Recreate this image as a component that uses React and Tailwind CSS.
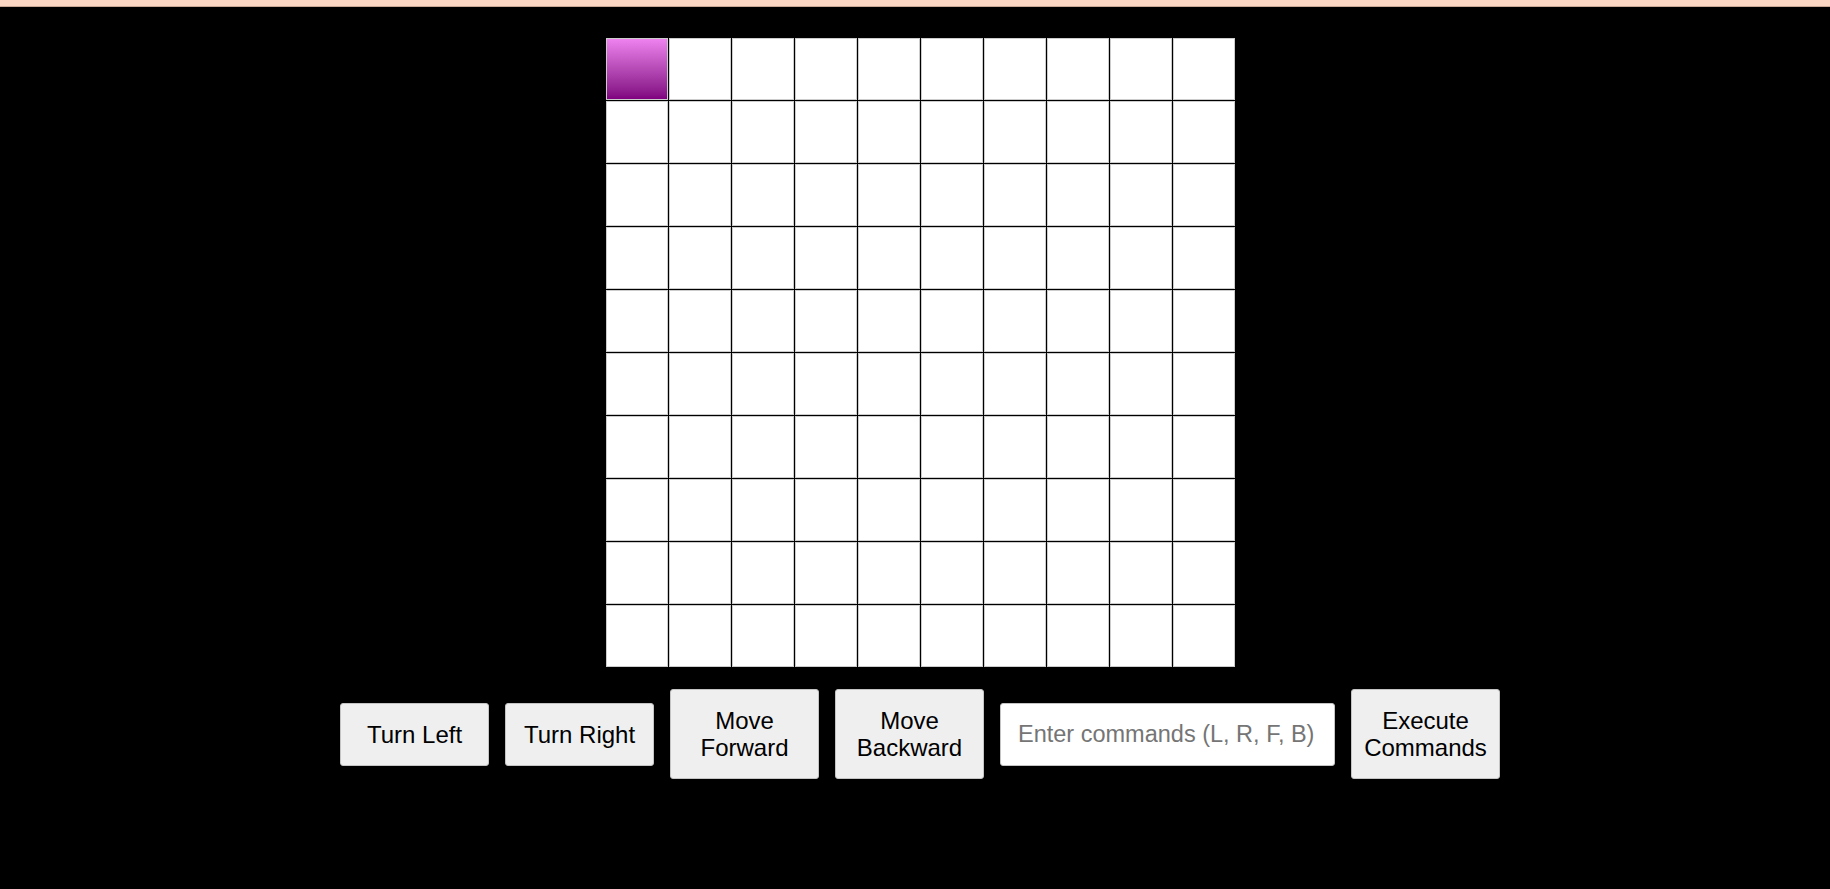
import React, { useState } from 'react';

const SIZE = 10;

const CtrlButton = ({ children, onClick }) => (
  <button
    onClick={onClick}
    className="w-[149px] py-[17px] text-[24px] leading-[27px] text-black bg-[#efefef] border border-[#c4c4c4] rounded-[3px] text-center"
  >
    {children}
  </button>
);

export default function App() {
  const [pos] = useState({ x: 0, y: 0 });
  const [cmds, setCmds] = useState('');

  return (
    <div className="min-h-screen bg-black font-['Liberation_Sans',Arial,sans-serif]">
      <div className="h-[7px] bg-[#fcd6c5] border-b border-[#c8a797]" />
      <div className="flex flex-col items-center pl-[10px]">
        {/* board */}
        <div className="mt-[31px] grid grid-cols-[repeat(10,62px)] gap-px">
          {[...Array(SIZE * SIZE)].map((_, i) => {
            const active = i === pos.y * SIZE + pos.x;
            return (
              <div
                key={i}
                className={`h-[62px] w-[62px] border border-[#cccccc] ${
                  active ? 'bg-gradient-to-b from-[#ee82ee] to-[#800080]' : 'bg-white'
                }`}
              />
            );
          })}
        </div>

        {/* controls */}
        <div className="mt-[22px] flex items-center gap-[16px]">
          <CtrlButton>Turn Left</CtrlButton>
          <CtrlButton>Turn Right</CtrlButton>
          <CtrlButton>Move Forward</CtrlButton>
          <CtrlButton>Move Backward</CtrlButton>
          <input
            value={cmds}
            onChange={(e) => setCmds(e.target.value)}
            placeholder="Enter commands (L, R, F, B)"
            className="w-[335px] h-[63px] pl-[17px] pr-[2px] text-[23.5px] bg-white border border-[#c4c4c4] rounded-[3px] text-black placeholder:text-[#757575] outline-none"
          />
          <CtrlButton>Execute Commands</CtrlButton>
        </div>
      </div>
    </div>
  );
}
